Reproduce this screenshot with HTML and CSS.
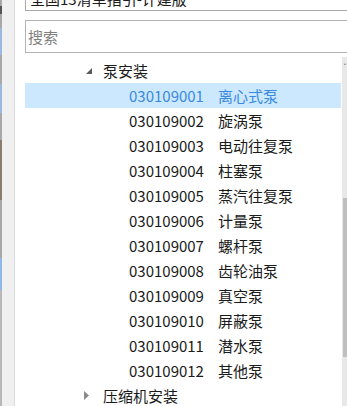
FILE: index.html
```html
<!DOCTYPE html>
<html lang="zh">
<head>
<meta charset="utf-8">
<link rel="stylesheet" href="styles.css">
</head>
<body>
<div class="edge"></div>
<div class="side"></div>
<div class="main">
  <div class="combo"><span class="combo-text">全国13清单指引-计建版</span></div>
  <div class="search"><span class="placeholder">搜索</span></div>
  <div class="treewrap">
    <div class="tree">
      <div class="row group">
        <span class="tw"><svg width="6" height="6" viewBox="0 0 6 6"><polygon points="6,0 6,6 0,6" fill="#5a5a5a"/></svg></span>
        <span>泵安装</span>
      </div>
      <div class="row leaf selected"><span class="code">030109001</span><span>离心式泵</span></div>
      <div class="row leaf"><span class="code">030109002</span><span>旋涡泵</span></div>
      <div class="row leaf"><span class="code">030109003</span><span>电动往复泵</span></div>
      <div class="row leaf"><span class="code">030109004</span><span>柱塞泵</span></div>
      <div class="row leaf"><span class="code">030109005</span><span>蒸汽往复泵</span></div>
      <div class="row leaf"><span class="code">030109006</span><span>计量泵</span></div>
      <div class="row leaf"><span class="code">030109007</span><span>螺杆泵</span></div>
      <div class="row leaf"><span class="code">030109008</span><span>齿轮油泵</span></div>
      <div class="row leaf"><span class="code">030109009</span><span>真空泵</span></div>
      <div class="row leaf"><span class="code">030109010</span><span>屏蔽泵</span></div>
      <div class="row leaf"><span class="code">030109011</span><span>潜水泵</span></div>
      <div class="row leaf"><span class="code">030109012</span><span>其他泵</span></div>
      <div class="row group">
        <span class="tw tw-closed"><svg width="5" height="9" viewBox="0 0 5 9"><polygon points="0,0 5,4.5 0,9" fill="#8a8a8a"/></svg></span>
        <span>压缩机安装</span>
      </div>
    </div>
    <div class="scroll">
      <div class="arrow"></div>
      <div class="thumb"></div>
    </div>
  </div>
</div>
</body>
</html>
```
FILE: styles.css
```css
html, body {
  margin: 0;
  padding: 0;
}
body {
  width: 347px;
  height: 406px;
  overflow: hidden;
  display: flex;
  background: #ffffff;
  font-family: "Noto Sans CJK SC", "Microsoft YaHei", sans-serif;
  font-size: 15px;
  color: #1b1b1b;
}
.edge {
  width: 2px;
  flex: none;
  background: linear-gradient(to bottom,
    #a8a8a8 0, #a8a8a8 6px, #555 6px, #555 14px, #a8a8a8 14px,
    #a8a8a8 28px, #9ab8e0 28px, #9ab8e0 55px, #a8a8a8 55px,
    #a8a8a8 84px, #9ab8e0 84px, #9ab8e0 113px, #a8a8a8 113px,
    #a8a8a8 140px, #8a7d6e 140px, #8a7d6e 200px, #a8a8a8 200px,
    #a8a8a8 258px, #8fb8e8 258px, #8fb8e8 290px, #b8b8b8 290px);
}
.side {
  width: 12px;
  flex: none;
  background: #f0f0f0;
  border-right: 1px solid #dcdcdc;
}
.main {
  flex: 1;
  min-width: 0;
  padding-left: 10px;
  display: flex;
  flex-direction: column;
}
.combo {
  margin-top: -20px;
  margin-right: -10px;
  height: 29px;
  border: 1px solid #a9a9a9;
  padding: 8px 0 0 4px;
  box-sizing: border-box;
  height: 31px;
  line-height: 20px;
  white-space: nowrap;
  overflow: hidden;
}
.search {
  margin-top: 9px;
  margin-right: -10px;
  height: 33px;
  box-sizing: border-box;
  border: 1px solid #b4b4b4;
  padding-left: 2px;
  display: flex;
  align-items: center;
}
.placeholder {
  color: #808080;
}
.treewrap {
  margin-top: 4px;
  flex: 1;
  display: flex;
  min-height: 0;
}
.tree {
  flex: 1;
  min-width: 0;
  padding-top: 1px;
}
.row {
  height: 25px;
  display: flex;
  align-items: center;
  white-space: nowrap;
}
.group {
  padding-left: 58px;
}
.tw {
  width: 20px;
  display: flex;
  align-items: center;
  padding-left: 3px;
  box-sizing: border-box;
}
.tw-closed {
  padding-left: 1px;
}
.leaf {
  padding-left: 104px;
}
.code {
  width: 89px;
  flex: none;
}
.selected {
  background: #cce8ff;
  color: #3a8ae0;
}
.scroll {
  width: 5px;
  margin-left: 1px;
  background: #e8e8e8;
  display: flex;
  flex-direction: column;
  align-items: flex-end;
}
.arrow {
  margin-top: 6px;
  margin-right: 1px;
  width: 0;
  height: 0;
  border-left: 1.5px solid transparent;
  border-right: 1.5px solid transparent;
  border-bottom: 2px solid #888;
}
.thumb {
  margin-top: 133px;
  width: 4px;
  height: 159px;
  background: #bfbfbf;
}
```
